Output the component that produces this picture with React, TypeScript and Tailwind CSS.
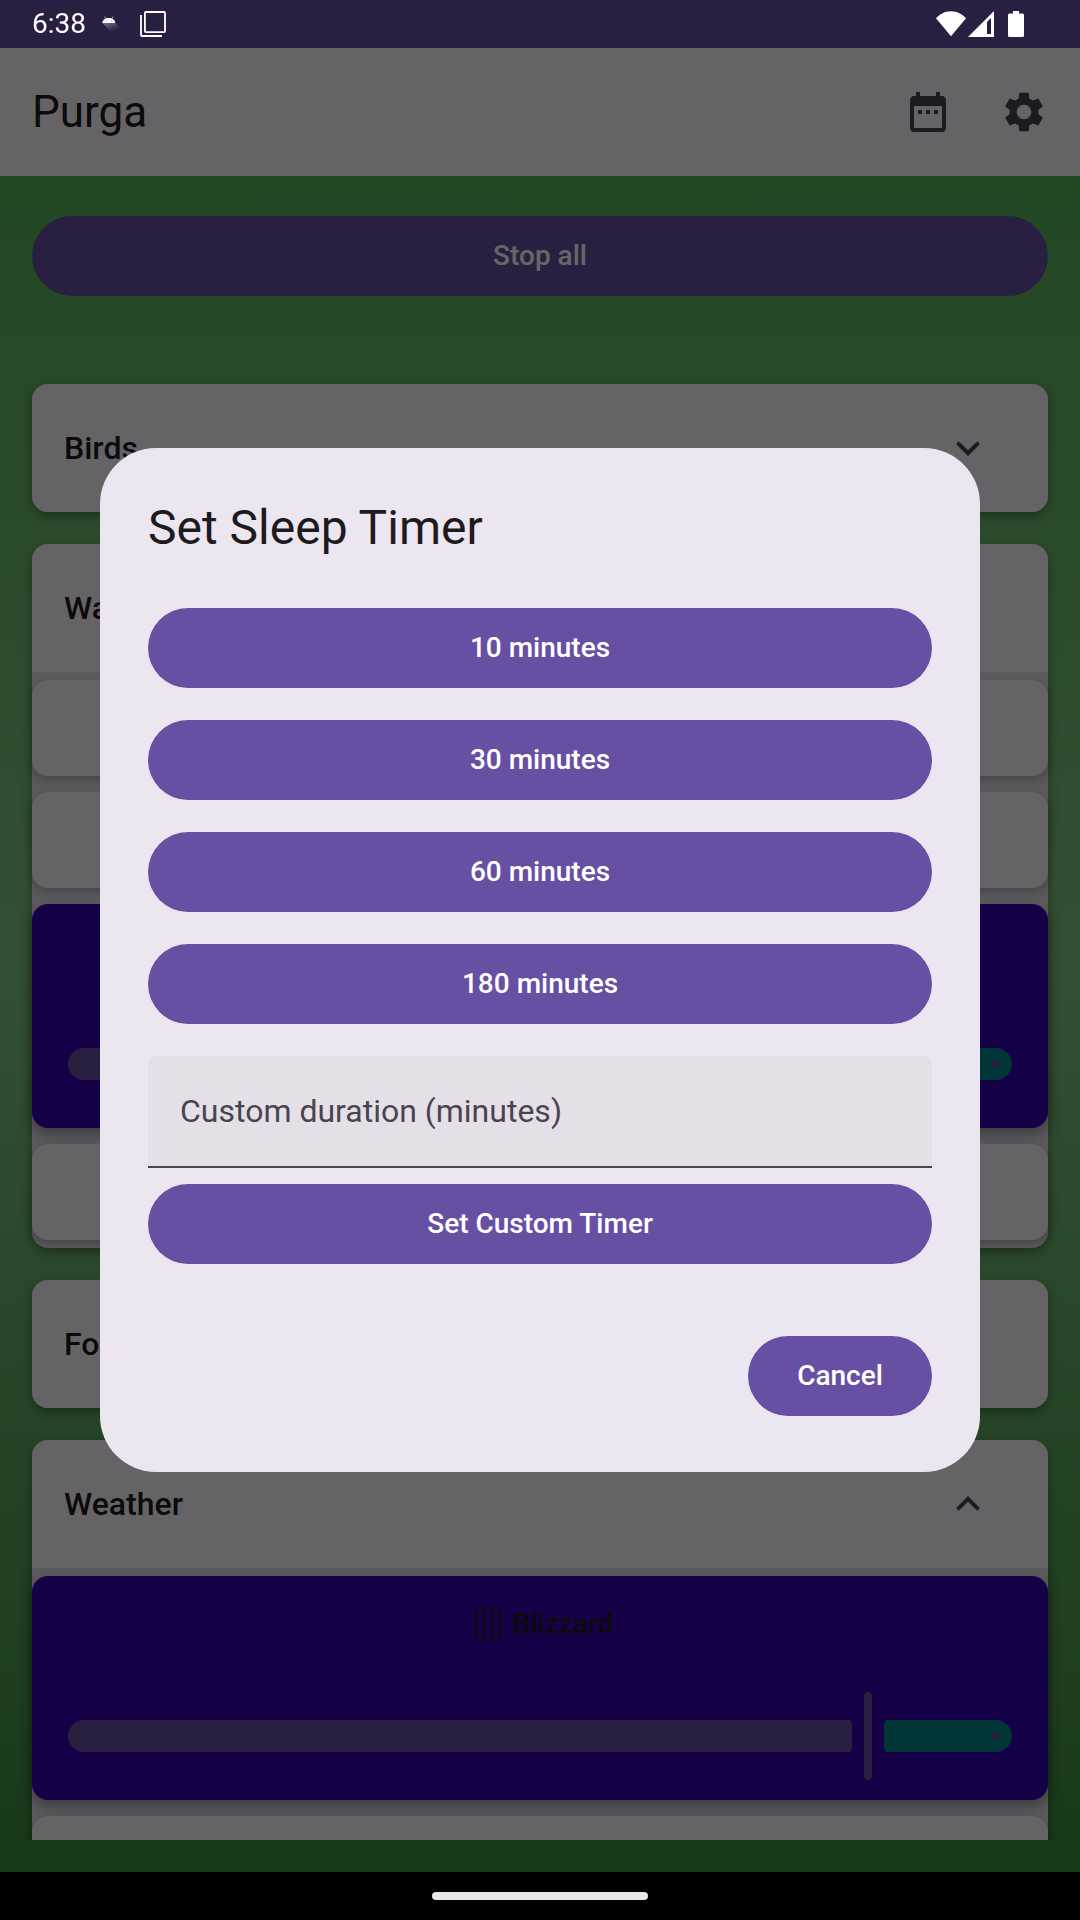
import { useState } from "react";
import type { ReactNode } from "react";

const CHEVRON_DOWN = "M7.41 8.59 12 13.17l4.59-4.58L18 10l-6 6-6-6z";
const CHEVRON_UP = "M7.41 15.41 12 10.83l4.59 4.58L18 14l-6-6-6 6z";

function Icon({ path }: { path: string }) {
  return (
    <svg viewBox="0 0 24 24" className="size-12 fill-[#49454f]" aria-hidden="true">
      <path d={path} />
    </svg>
  );
}

function StatusBar() {
  return (
    <div className="relative z-20 flex h-12 shrink-0 items-center px-8 text-white">
      <span className="text-[28px] leading-8">6:38</span>
      <svg viewBox="0 0 20 18" className="ml-4 h-[18px] w-5" aria-hidden="true">
        <defs>
          <linearGradient id="longShadow" x1="0" y1="0" x2="0.8" y2="1">
            <stop offset="0.1" stopColor="#fff" stopOpacity="0.32" />
            <stop offset="0.8" stopColor="#fff" stopOpacity="0" />
          </linearGradient>
        </defs>
        <path d="M0.500 8H13.300l5.700 5-6 5h-3z" fill="url(#longShadow)" />
        <path d="M0.300 8C.6 5 3 3 6.800 3S13 5 13.300 8z" fill="#fff" />
        <path d="M3.800 3.800 2.600 1.600M9.800 3.800l1.200-2.200" stroke="#fff" strokeWidth="0.6" />
        <circle cx="4" cy="6" r="0.4" fill="#2b2042" />
        <circle cx="9.600" cy="6" r="0.4" fill="#2b2042" />
      </svg>
      <svg viewBox="0 0 26 26" className="ml-[18px] size-[26px]" fill="none" stroke="#fff" strokeWidth="1.8" aria-hidden="true">
        <rect x="4.900" y="1" width="20.100" height="20.100" rx="1" />
        <path d="M1 4v20a1 1 0 0 0 1 1h20" />
      </svg>
      <div className="mr-6 ml-auto flex items-center">
        <svg viewBox="0 0 30 26" className="h-[26px] w-[30px]" fill="#fff" aria-hidden="true">
          <path d="M0 7.300C3.800 3 9 .2 15 .2S26.200 3 30 7.300L15 25.200z" />
        </svg>
        <svg viewBox="0 0 26 26" className="ml-[2px] size-[26px]" fill="#fff" aria-hidden="true">
          <path fillRule="evenodd" d="M26 0v26H0zM23 7 19 11V23h4z" />
        </svg>
        <svg viewBox="0 0 16 26" className="ml-[14px] h-[26px] w-4" fill="#fff" aria-hidden="true">
          <path d="M5 0h6v2.400h3.500A1.500 1.500 0 0 1 16 3.900V24.500A1.500 1.500 0 0 1 14.500 26h-13A1.500 1.500 0 0 1 0 24.500V3.900A1.500 1.500 0 0 1 1.500 2.400H5z" />
        </svg>
      </div>
    </div>
  );
}

function TopBar() {
  return (
    <header className="flex h-32 shrink-0 items-center gap-12 bg-[#fef7ff] px-8">
      <h1 className="flex-1 text-[44px] leading-14 text-[#1d1b20]">Purga</h1>
      <button type="button" aria-label="Schedule">
        <Icon path="M9 11H7v2h2v-2zm4 0h-2v2h2v-2zm4 0h-2v2h2v-2zm2-7h-1V2h-2v2H8V2H6v2H5c-1.110 0-1.990.9-1.990 2L3 20c0 1.100.89 2 2 2h14c1.100 0 2-.9 2-2V6c0-1.100-.9-2-2-2zm0 16H5V9h14v11z" />
      </button>
      <button type="button" aria-label="Settings">
        <Icon path="M19.14 12.94c.04-.3.06-.61.06-.94 0-.32-.02-.64-.07-.94l2.030-1.580c.18-.14.23-.41.12-.61l-1.920-3.320c-.12-.22-.37-.29-.59-.22l-2.390.96c-.5-.38-1.030-.7-1.620-.94l-.36-2.540c-.04-.24-.24-.41-.48-.41h-3.840c-.24 0-.43.17-.47.41l-.36 2.540c-.59.24-1.130.57-1.620.94l-2.390-.96c-.22-.08-.47 0-.59.22L2.740 8.870c-.12.21-.08.47.12.61l2.030 1.580c-.05.3-.09.63-.09.94s.02.64.07.94l-2.030 1.580c-.18.14-.23.41-.12.61l1.920 3.320c.12.22.37.29.59.22l2.390-.96c.5.38 1.030.7 1.620.94l.36 2.540c.05.24.24.41.48.41h3.840c.24 0 .44-.17.47-.41l.36-2.540c.59-.24 1.130-.56 1.620-.94l2.390.96c.22.08.47 0 .59-.22l1.920-3.320c.12-.22.07-.47-.12-.61l-2.010-1.580zM12 15.600c-1.980 0-3.600-1.620-3.600-3.600s1.620-3.600 3.600-3.600 3.600 1.620 3.600 3.600-1.620 3.600-3.600 3.600z" />
      </button>
    </header>
  );
}

function VolumeSlider({ label }: { label: string }) {
  const [value, setValue] = useState(84.7);
  return (
    <div className="relative flex h-22 items-center gap-3">
      <div className="h-8 rounded-l-2xl rounded-r-sm bg-[#6750a4]" style={{ width: `calc(${value}% - 16px)` }} />
      <div className="h-full w-2 rounded-full bg-[#6750a4]" />
      <div className="flex h-8 flex-1 items-center justify-end rounded-l-sm rounded-r-2xl bg-[#018786] pr-3">
        <div className="size-2 rounded-full bg-[#6750a4]" />
      </div>
      <input
        type="range"
        min={2}
        max={98}
        step={0.1}
        value={value}
        aria-label={label}
        onChange={(e) => setValue(Number(e.target.value))}
        className="absolute inset-0 size-full cursor-pointer opacity-0"
      />
    </div>
  );
}

function QuietSound() {
  return <div className="h-24 rounded-2xl bg-[#fef7ff] shadow-[0_4px_10px_rgba(0,0,0,0.25)]" />;
}

function PlayingSound({ name }: { name?: string }) {
  return (
    <div className="rounded-2xl bg-[#3700b3] px-9 pb-5 shadow-[0_6px_14px_rgba(0,0,0,0.35)]">
      <div className="mb-5 flex h-24 items-center justify-center pl-2 text-[28px] leading-10 font-medium text-[#1d1b20]">
        {name && (
          <>
            <span className="mr-3 flex gap-[6px]" aria-hidden="true">
              <span className="h-[34px] w-[10px] border-2 border-[#1d1b20]" />
              <span className="h-[34px] w-[10px] border-2 border-[#1d1b20]" />
            </span>
            {name}
          </>
        )}
      </div>
      <VolumeSlider label={name ? `${name} volume` : "Volume"} />
    </div>
  );
}

function Category({ name, children }: { name: string; children?: ReactNode }) {
  const open = Boolean(children);
  return (
    <section className="shrink-0 rounded-2xl bg-[#e6e0e9] shadow-[0_4px_12px_rgba(0,0,0,0.35)]">
      <button
        type="button"
        aria-expanded={open}
        className={
          open
            ? "flex h-32 w-full items-center justify-between rounded-t-2xl bg-[#fef7ff] pr-14 pl-8"
            : "flex h-32 w-full items-center justify-between rounded-2xl bg-[#fef7ff] pr-14 pl-8"
        }
      >
        <span className="text-[32px] leading-12 font-medium text-[#1d1b20]">{name}</span>
        <Icon path={open ? CHEVRON_UP : CHEVRON_DOWN} />
      </button>
      {open && <div className="flex flex-col gap-4 py-2">{children}</div>}
    </section>
  );
}

function FilledButton({ children, className = "w-full" }: { children: ReactNode; className?: string }) {
  return (
    <button
      type="button"
      className={`h-20 shrink-0 rounded-full bg-[#6750a4] px-12 text-[28px] leading-10 font-medium text-white ${className}`}
    >
      {children}
    </button>
  );
}

function SleepTimerDialog() {
  return (
    <div className="fixed inset-0 z-10 flex items-center justify-center bg-black/60 px-8">
      <div
        role="dialog"
        aria-modal="true"
        aria-labelledby="sleep-timer-title"
        className="w-full max-w-[880px] rounded-[56px] bg-[#ece6f0] px-12 pt-12 pb-14"
      >
        <h2 id="sleep-timer-title" className="text-5xl leading-16 text-[#1d1b20]">
          Set Sleep Timer
        </h2>
        <div className="mt-12 flex flex-col gap-8">
          <FilledButton>10 minutes</FilledButton>
          <FilledButton>30 minutes</FilledButton>
          <FilledButton>60 minutes</FilledButton>
          <FilledButton>180 minutes</FilledButton>
          <input
            type="text"
            inputMode="numeric"
            aria-label="Custom duration (minutes)"
            placeholder="Custom duration (minutes)"
            className="h-28 w-full rounded-t-lg border-b-2 border-[#49454f] bg-[#e5e0e7] px-8 text-[32px] text-[#1d1b20] outline-none placeholder:text-[#49454f]"
          />
        </div>
        <div className="mt-4">
          <FilledButton>Set Custom Timer</FilledButton>
        </div>
        <div className="mt-18 flex justify-end">
          <FilledButton className="min-w-46">Cancel</FilledButton>
        </div>
      </div>
    </div>
  );
}

export default function App() {
  return (
    <div className="flex h-screen flex-col overflow-hidden bg-linear-to-b from-[#4caf50] via-[#81c784] to-[#388e3c] font-[Roboto,sans-serif]">
      <div className="bg-[#6750a4]">
        <StatusBar />
      </div>
      <TopBar />
      <main className="flex min-h-0 flex-1 flex-col pt-10 pb-8">
        <div className="px-8">
          <FilledButton>Stop all</FilledButton>
        </div>
        <div className="mt-14 flex min-h-0 flex-1 flex-col gap-8 overflow-hidden px-8 pt-8">
          <Category name="Birds" />
          <Category name="Water">
            <QuietSound />
            <QuietSound />
            <PlayingSound />
            <QuietSound />
          </Category>
          <Category name="Forest" />
          <Category name="Weather">
            <PlayingSound name="Blizzard" />
            <QuietSound />
          </Category>
        </div>
      </main>
      <div className="relative z-20 flex h-12 shrink-0 items-center justify-center bg-black">
        <div className="h-2 w-1/5 rounded-full bg-[#ebe8e8]" />
      </div>
      <SleepTimerDialog />
    </div>
  );
}
